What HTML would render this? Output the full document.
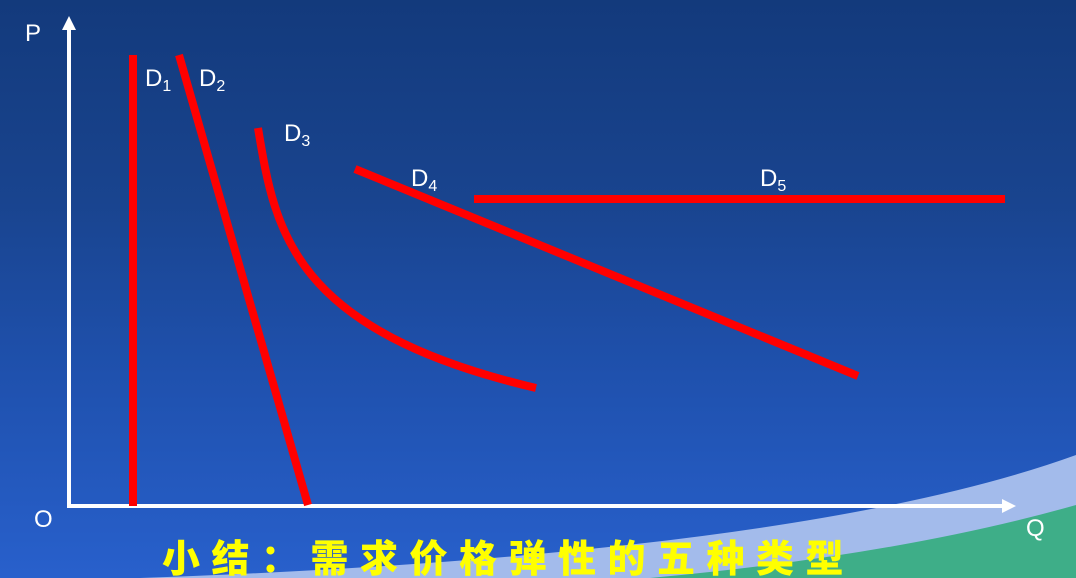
<!DOCTYPE html><html><head><meta charset="utf-8"><style>
body{margin:0}
#s{position:relative;width:1076px;height:578px;overflow:hidden;background:linear-gradient(#133a7c 0%,#19448f 35%,#1f51ae 65%,#2860cc 100%);font-family:"Liberation Sans",sans-serif}
svg{position:absolute;left:0;top:0}
.t{position:absolute;left:162px;top:528px;font:900 38px "Noto Sans CJK SC",sans-serif;color:#ffff00;letter-spacing:11.5px;white-space:nowrap}
</style></head><body><div id="s">
<svg width="1076" height="578">
<path d="M140 578 Q800 555 1076 455 L1076 578Z" fill="#a3bbeb"/>
<path d="M650 578 Q900 555 1076 505 L1076 578Z" fill="#3eae88"/>
<g stroke="#fff" stroke-width="4" fill="none"><line x1="69" y1="506" x2="69" y2="28"/><line x1="67" y1="506" x2="1004" y2="506"/></g>
<polygon points="69,16 62,30 76,30" fill="#fff"/><polygon points="1016,506 1002,499 1002,513" fill="#fff"/>
<g stroke="#f00" stroke-width="8" fill="none">
<line x1="133" y1="55" x2="133" y2="506"/>
<line x1="179" y1="55" x2="308" y2="505"/>
<path d="M258 128 C275 230 290 330 536 388"/>
<line x1="355" y1="169" x2="858" y2="376"/>
<line x1="474" y1="199" x2="1005" y2="199"/>
</g>
<g fill="#fff" font-size="24">
<text x="25" y="41">P</text><text x="34" y="527">O</text><text x="1026" y="536">Q</text>
<text x="145" y="86">D<tspan font-size="16" dy="5">1</tspan></text>
<text x="199" y="86">D<tspan font-size="16" dy="5">2</tspan></text>
<text x="284" y="141">D<tspan font-size="16" dy="5">3</tspan></text>
<text x="411" y="186">D<tspan font-size="16" dy="5">4</tspan></text>
<text x="760" y="186">D<tspan font-size="16" dy="5">5</tspan></text>
</g></svg>
<div class="t">小结：需求价格弹性的五种类型</div>
</div></body></html>
